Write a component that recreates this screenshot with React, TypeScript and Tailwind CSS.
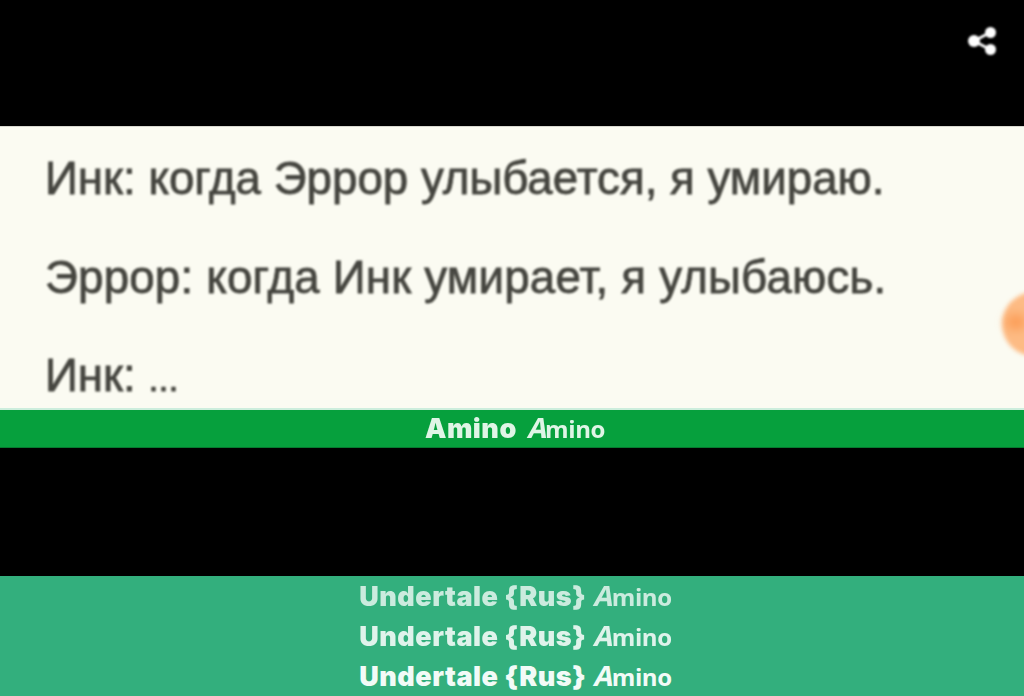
import React from 'react';

// the script-style Amino wordmark
function AminoMark() {
  return (
    <span className="inline-flex items-baseline font-['Open_Sans',sans-serif] text-[24px] font-bold leading-10">
      <span className="inline-block -skew-x-12 text-[28px]">A</span>
      <span className="-ml-[3px] tracking-[-0.4px]">mino</span>
    </span>
  );
}

function CommunityLine({ className }: { className: string }) {
  return (
    <div className={`flex h-10 -translate-y-px items-baseline justify-center gap-[9px] pl-[7px] text-[#f2fbf7] ${className}`}>
      <span className="font-['Inter',sans-serif] text-[27px] font-black leading-10 tracking-[0.5px]">Undertale {'{Rus}'}</span>
      <AminoMark />
    </div>
  );
}

export default function App() {
  return (
    <div className="relative flex h-[696px] w-[1024px] flex-col overflow-hidden bg-black">
      {/* Top bar with share icon */}
      <div className="flex h-[126px] shrink-0 items-start justify-end pr-[25px] pt-[26px]">
        <svg width="32" height="31" viewBox="0 0 32 31" className="blur-[1px]">
          <path d="M7 15 L23 6.5 M7 15 L23 23.5" stroke="#fff" strokeWidth="3" />
          <circle cx="7" cy="15" r="6" fill="#fff" />
          <circle cx="23.5" cy="6.5" r="5.5" fill="#fff" />
          <circle cx="23.5" cy="23.5" r="5.5" fill="#fff" />
        </svg>
      </div>

      {/* Message card */}
      <div className="relative h-[282px] shrink-0 overflow-hidden border-t border-[#d8d8d0] bg-[#fbfbf2]">
        <div className="flex flex-col gap-[46.5px] pl-[45px] pt-[26px] font-['Liberation_Sans',sans-serif] text-[45.7px] leading-[52px] text-[#45453f] blur-[0.8px] [-webkit-text-stroke:0.8px_#45453f]">
          <p className="whitespace-nowrap">Инк: когда Эррор улыбается, я умираю.</p>
          <p className="whitespace-nowrap tracking-[0.2px]">Эррор: когда Инк умирает, я улыбаюсь.</p>
          <p className="whitespace-nowrap">Инк: <span className="text-[36px]">...</span></p>
        </div>
        <div className="absolute left-[1002px] top-[165px] h-[64px] w-[64px] rounded-full bg-[#fdbb84] blur-[2px]">
          <div className="absolute left-[4px] top-[22px] h-[16px] w-[20px] rounded-full bg-[#fb9f5a] blur-[4px]" />
        </div>
      </div>

      {/* Amino strip */}
      <div className="flex h-10 shrink-0 justify-center overflow-hidden border-t-2 border-t-[#cdeedd] border-b border-b-[#067a30] bg-[#06a03d] pl-[6px] text-[#dff5e6] blur-[0.5px]">
        <div className="flex -translate-y-[3px] items-baseline gap-[12px]">
          <span className="font-['Inter',sans-serif] text-[27px] font-black leading-[36px] tracking-[0.5px]">Amino</span>
          <AminoMark />
        </div>
      </div>

      <div className="h-[128px] shrink-0 bg-black" />

      {/* Community name, repeated three times */}
      <div className="flex h-[120px] shrink-0 flex-col overflow-hidden bg-[#33af7d]">
        <CommunityLine className="opacity-80 blur-[0.7px]" />
        <CommunityLine className="opacity-90 blur-[0.7px]" />
        <CommunityLine className="" />
      </div>
    </div>
  );
}
